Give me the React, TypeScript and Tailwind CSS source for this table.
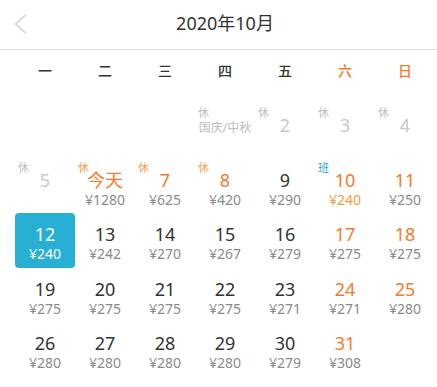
type Day = {
  n?: number;
  label?: string;
  price?: string;
  tag?: '休' | '班';
  off?: boolean;
  orange?: boolean;
  cheap?: boolean;
  today?: boolean;
  selected?: boolean;
};

const weekdays = ['一', '二', '三', '四', '五', '六', '日'];

const rows: (Day | null)[][] = [
  [
    null,
    null,
    null,
    { n: 1, label: '国庆/中秋', tag: '休', off: true },
    { n: 2, tag: '休', off: true },
    { n: 3, tag: '休', off: true },
    { n: 4, tag: '休', off: true },
  ],
  [
    { n: 5, tag: '休', off: true },
    { n: 6, today: true, tag: '休', orange: true, price: '1280' },
    { n: 7, tag: '休', orange: true, price: '625' },
    { n: 8, tag: '休', orange: true, price: '420' },
    { n: 9, price: '290' },
    { n: 10, tag: '班', orange: true, price: '240', cheap: true },
    { n: 11, orange: true, price: '250' },
  ],
  [
    { n: 12, price: '240', selected: true },
    { n: 13, price: '242' },
    { n: 14, price: '270' },
    { n: 15, price: '267' },
    { n: 16, price: '279' },
    { n: 17, orange: true, price: '275' },
    { n: 18, orange: true, price: '275' },
  ],
  [
    { n: 19, price: '275' },
    { n: 20, price: '275' },
    { n: 21, price: '275' },
    { n: 22, price: '275' },
    { n: 23, price: '271' },
    { n: 24, orange: true, price: '271' },
    { n: 25, orange: true, price: '280' },
  ],
  [
    { n: 26, price: '280' },
    { n: 27, price: '280' },
    { n: 28, price: '280' },
    { n: 29, price: '280' },
    { n: 30, price: '279' },
    { n: 31, orange: true, price: '308' },
    null,
  ],
];

function Cell({ d }: { d: Day | null }) {
  if (!d) return <div className="h-[54.5px]" />;

  let numColor = 'text-[#333]';
  if (d.off) numColor = 'text-[#c8c8c8]';
  else if (d.orange || d.today) numColor = 'text-[#f27b2b]';
  if (d.selected) numColor = 'text-white';

  let tagColor = 'text-[#f5a04a]';
  if (d.off) tagColor = 'text-[#bdbdbd]';
  if (d.tag === '班') tagColor = 'text-[#2ba7d8]';

  return (
    <div
      className={`relative h-[54.5px] flex flex-col items-center pt-[11px] ${
        d.selected ? 'bg-[#27b0d4] rounded-[4px]' : ''
      }`}
    >
      {d.tag && (
        <span className={`absolute left-[3px] top-[3px] text-[11px] leading-[12px] ${tagColor}`}>
          {d.tag}
        </span>
      )}
      {d.label ? (
        <span className="mt-[6px] text-[12px] leading-[14px] text-[#bdbdbd] whitespace-nowrap">{d.label}</span>
      ) : (
        <span className={`text-[18px] leading-[20px] ${numColor}`}>{d.today ? '今天' : d.n}</span>
      )}
      {d.price && (
        <span
          className={`mt-[2px] text-[14px] leading-[16px] ${
            d.selected ? 'text-white' : d.cheap ? 'text-[#f39a3c]' : 'text-[#8a8a8a]'
          }`}
        >
          ¥{d.price}
        </span>
      )}
    </div>
  );
}

export default function App() {
  return (
    <div
      className="w-[437px] h-[387px] bg-white overflow-hidden"
      style={{ fontFamily: '"Noto Sans", "Noto Sans CJK SC", sans-serif' }}
    >
      <header className="h-[50px] flex items-center border-b border-[#dedede]">
        <div className="w-[40px] pl-[13px] pb-[2px] flex items-center">
          <svg width="14" height="20" viewBox="0 0 14 20" fill="none">
            <path d="M12 1.5 L2.5 10 L12 18.5" stroke="#dcdcdc" strokeWidth="2" strokeLinecap="round" strokeLinejoin="round" />
          </svg>
        </div>
        <h1 className="flex-1 text-center text-[18px] leading-[22px] text-[#333] pb-[3px]">2020年10月</h1>
        <div className="w-[27px]" />
      </header>

      <div className="pl-[15px] pr-[2px]">
        <div className="grid grid-cols-7 h-[40px] items-center">
          {weekdays.map((w, i) => (
            <div
              key={w}
              className={`text-center text-[14px] font-medium ${i >= 5 ? 'text-[#f27b2b]' : 'text-[#333]'}`}
            >
              {w}
            </div>
          ))}
        </div>

        <div className="mt-[14px] grid grid-cols-7">
          {rows.flat().map((d, i) => (
            <Cell key={i} d={d} />
          ))}
        </div>
      </div>
    </div>
  );
}
